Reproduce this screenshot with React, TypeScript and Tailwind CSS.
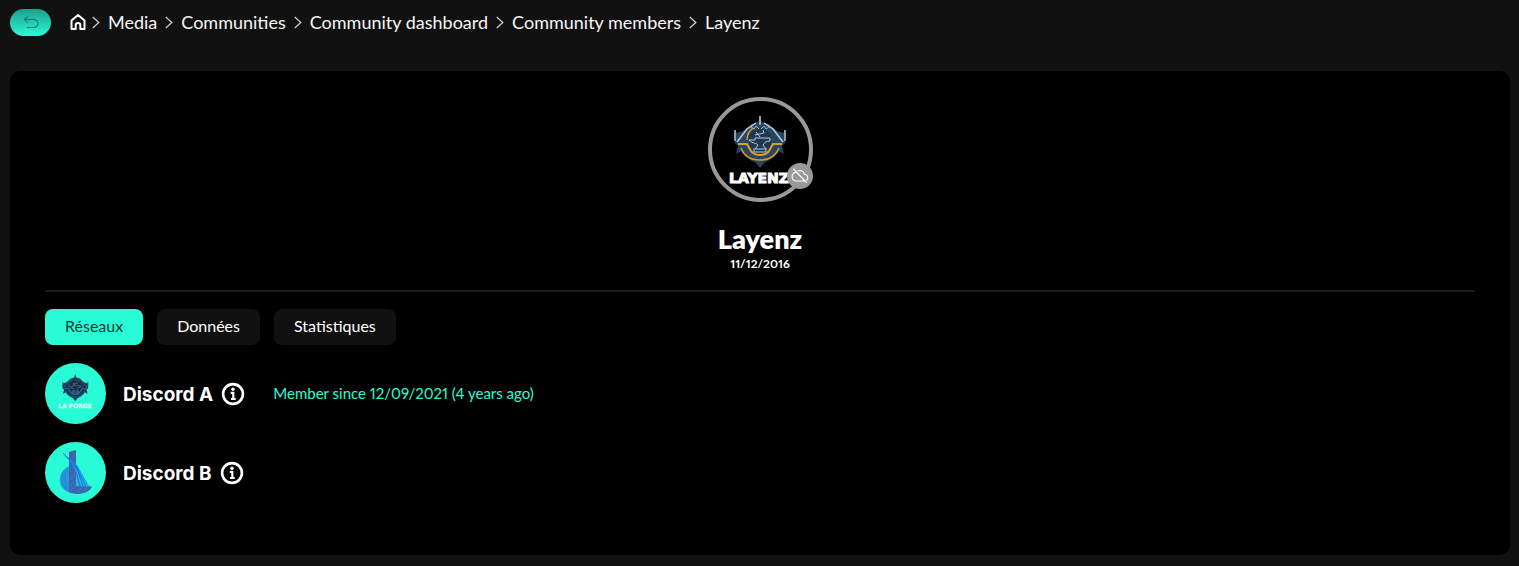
import { useState } from "react";

interface Network {
  id: string;
  name: string;
  since?: string;
  logo: "forge" | "tower";
}

const CRUMBS = ["Media", "Communities", "Community dashboard", "Community members", "Layenz"];

const TABS = ["Réseaux", "Données", "Statistiques"];

const NETWORKS: Network[] = [
  { id: "a", name: "Discord A", since: "Member since 12/09/2021 (4 years ago)", logo: "forge" },
  { id: "b", name: "Discord B", logo: "tower" },
];

function BackIcon() {
  return (
    <svg width="16" height="14" viewBox="0 0 16 14" fill="none" stroke="#0b6b60" aria-hidden="true">
      <path d="M5 1.5 1.2 4.5 4.5 7.8M1.2 4.5H11a4 4 0 0 1 0 8H4.5" strokeLinecap="round" strokeLinejoin="round" />
    </svg>
  );
}

function HomeIcon() {
  return (
    <svg width="16" height="18" viewBox="0 0 16 18" fill="none" stroke="#fff" strokeWidth="2" aria-hidden="true">
      <path d="M1.5 7.4 8 2l6.5 5.4V16h-4.2v-3.700a2.300 2.300 0 0 0-4.600 0V16H1.500z" strokeLinejoin="round" />
    </svg>
  );
}

function ChevronIcon() {
  return (
    <svg width="8" height="13" viewBox="0 0 8 13" fill="none" stroke="#d4d4d4" strokeWidth="1.2" aria-hidden="true">
      <path d="m.8 1 6 5.500-6 5.500" />
    </svg>
  );
}

function CloudOffIcon() {
  return (
    <svg width="18" height="16" viewBox="0 0 18 16" fill="none" stroke="#fff" strokeWidth="1.1" aria-hidden="true">
      <path
        d="M4.600 4.500A4.300 4.300 0 0 0 4.800 13h8.700M7 3a4.600 4.600 0 0 1 6.400 3.200 3.500 3.500 0 0 1 2.300 6M2.500 1l13 13.500"
        strokeLinecap="round"
      />
    </svg>
  );
}

function InfoIcon() {
  return (
    <svg width="24" height="24" viewBox="0 0 24 24" fill="none" stroke="#fff" aria-hidden="true">
      <circle cx="12" cy="12" r="9.9" strokeWidth="2.6" />
      <circle cx="12" cy="7.3" r="1.7" fill="#fff" stroke="none" />
      <path d="M9.700 10.900h2.600v6M10 17h4.700" strokeWidth="2.2" />
    </svg>
  );
}

// Winged shield with the anvil, shared by the member avatar and the Discord logo
function Crest({ dark = false }: { dark?: boolean }) {
  const gold = dark ? "#1677a8" : "#e09a26";
  const steel = dark ? "#4d6b88" : "#c3ced8";
  const body = dark ? "#1b3450" : "#27465f";
  return (
    <>
      <path d="M26 0l2 7 7 2 8 7 6 2 2-3v13l-3 3 2 8-5-3c-3 5-8 9-14 11l-5 6-5-6c-6-2-11-6-14-11l-5 3 2-8-3-3V15l2 3 6-2 8-7 7-2z" fill={body} />
      <path d="M1 15v11M51 15v11M26 1v9M3 27 13 14l9-6M49 27 39 14l-9-6" stroke={steel} strokeWidth="1.4" fill="none" />
      <path d="m17 12 3 2 2-3 4 4 4-4 2 3 3-2" stroke={steel} strokeWidth=".8" fill="none" />
      <path d="M15 20a13 13 0 0 1 22 0v14l-5 5H20l-5-5z" fill={dark ? "#142a42" : "#1d3850"} />
      <path d="M4 29h9l4 7c2 3 5 4 9 4s7-1 9-4l4-7h9" stroke={gold} strokeWidth="2.2" fill="none" />
      <path d="M7 33c3 8 10 12 19 12s16-4 19-12M19 13c-4 3-6 7-6 12" stroke={gold} strokeWidth="1.5" fill="none" />
      <path
        d="M15 25h6v-2h15v3c-4 0-6 2-7 4l3 4H21l3-4c-1-2-5-1-9-5zM21 20l9-2-1-3M22 17l4 5M20 37h12M20 33v4M32 33v4"
        stroke={dark ? "#7690a8" : "#b5c8d5"}
        strokeWidth="1"
        fill="none"
      />
    </>
  );
}

function MemberLogo() {
  return (
    <svg className="h-full w-full" viewBox="0 0 97 97" role="img" aria-label="Layenz">
      <g transform="translate(22 14)">
        <Crest />
      </g>
      <text
        x="47"
        y="82"
        textAnchor="middle"
        fill="#fff"
        stroke="#fff"
        strokeWidth="1"
        fontSize="14"
        fontWeight="700"
        fontFamily="DejaVu Sans, sans-serif"
      >
        LAYENZ
      </text>
    </svg>
  );
}

function ForgeLogo() {
  return (
    <svg className="h-full w-full" viewBox="0 0 61 61" role="img" aria-label="La Forge">
      <g transform="translate(17 11) scale(.51)">
        <Crest dark />
      </g>
      <text
        x="30"
        y="45"
        textAnchor="middle"
        fill="#d4fff5"
        stroke="#d4fff5"
        strokeWidth=".3"
        fontSize="6"
        fontWeight="700"
        fontFamily="DejaVu Sans, sans-serif"
      >
        LA FORGE
      </text>
    </svg>
  );
}

function TowerLogo() {
  return (
    <svg className="h-full w-full" viewBox="0 0 61 61" role="img" aria-label="Tower">
      <path d="M24 24c-6 3-10 9-9 16 1 8 9 12 17 12 7-1 12-4 15-8H33L24 24z" fill="#2599de" />
      <path d="m24 10 7-2v36l16 1c-3 5-9 7-15 7l-8-2z" fill="#3a66b0" />
      <path d="m18 11 8 7 6 5 12 21h-3l-9-10-5-12z" fill="#1a8fe6" />
      <path d="m31 25 13 19H31z" fill="#22b9ee" />
      <path d="m18 11 13 14 10 19M31 24l7 20M31 30l4 14" stroke="#1769cf" strokeWidth=".9" fill="none" />
      <path d="M18 32c-2 7 0 13 5 17M21 28c-2 8-1 14 2 19" stroke="#2b7dd0" strokeWidth=".8" fill="none" />
      <path d="m25 44 6-6M25 38l6-7M25 49l6-5M32 51l5-6M38 50l4-5" stroke="#5480c4" strokeWidth=".7" />
    </svg>
  );
}

function Breadcrumb() {
  return (
    <nav aria-label="Breadcrumb">
      <ol className="flex items-center text-[18px] leading-6 text-neutral-100">
        <li>
          <a href="#home" aria-label="Home" className="block">
            <HomeIcon />
          </a>
        </li>
        {CRUMBS.map((crumb, i) => (
          <li key={crumb} className="flex items-center">
            <span className={i === 0 ? "mr-2 ml-1.5" : "mx-2"}>
              <ChevronIcon />
            </span>
            <a href={"#" + i} aria-current={i === CRUMBS.length - 1 ? "page" : undefined}>
              {crumb}
            </a>
          </li>
        ))}
      </ol>
    </nav>
  );
}

function NetworkRow({ network }: { network: Network }) {
  return (
    <li className="flex items-center">
      <div className="size-[61px] shrink-0 overflow-hidden rounded-full bg-[#29fbd7]">
        {network.logo === "forge" ? <ForgeLogo /> : <TowerLogo />}
      </div>
      <h2 className="ml-[17px] pt-0.5 font-[Inter,sans-serif] text-[19px] leading-6 font-bold text-white">
        {network.name}
      </h2>
      <button type="button" aria-label={"About " + network.name} className="ml-2">
        <InfoIcon />
      </button>
      {network.since && (
        <p className="ml-7 pb-0.5 text-[15px] leading-6 text-[#29fbd7] proportional-nums">{network.since}</p>
      )}
    </li>
  );
}

export default function App() {
  const [tab, setTab] = useState(TABS[0]);

  return (
    <div className="min-h-screen bg-[#111] pt-2.5 pr-[9px] pb-[11px] pl-2.5 font-[Lato,sans-serif] text-white">
      <header className="flex h-6 items-center gap-[19px]">
        <button
          type="button"
          aria-label="Back"
          className="flex h-[27px] w-[41px] items-center justify-center rounded-full bg-linear-to-b from-[#1da08c] to-[#29fbd7]"
        >
          <BackIcon />
        </button>
        <Breadcrumb />
      </header>

      <main className="mt-[37px] rounded-[10px] bg-black px-[35px] pt-[26px] pb-[52px]">
        <section className="flex flex-col items-center border-b-2 border-[#1a1a1a] pb-[18px]">
          <div className="relative size-[105px] rounded-full border-4 border-[#999]">
            <MemberLogo />
            <span className="absolute -right-1 bottom-[9px] flex size-[26px] items-center justify-center rounded-full bg-[#999]">
              <CloudOffIcon />
            </span>
          </div>
          <h1 className="mt-[21px] text-[27px] leading-8 font-extrabold">Layenz</h1>
          <p className="mt-px text-[12px] leading-4 font-bold proportional-nums">11/12/2016</p>
        </section>

        <div role="tablist" className="mt-[17px] flex gap-3.5">
          {TABS.map((t) => (
            <button
              key={t}
              type="button"
              role="tab"
              aria-selected={t === tab}
              onClick={() => setTab(t)}
              className={
                "rounded-lg px-5 pt-[5px] pb-[7px] text-[16px] leading-6 " +
                (t === tab ? "bg-[#29fbd7] text-[#0b3b34]" : "bg-[#111] text-white")
              }
            >
              {t}
            </button>
          ))}
        </div>

        <ul className="mt-[18px] flex flex-col gap-[18px]">
          {NETWORKS.map((network) => (
            <NetworkRow key={network.id} network={network} />
          ))}
        </ul>
      </main>
    </div>
  );
}
